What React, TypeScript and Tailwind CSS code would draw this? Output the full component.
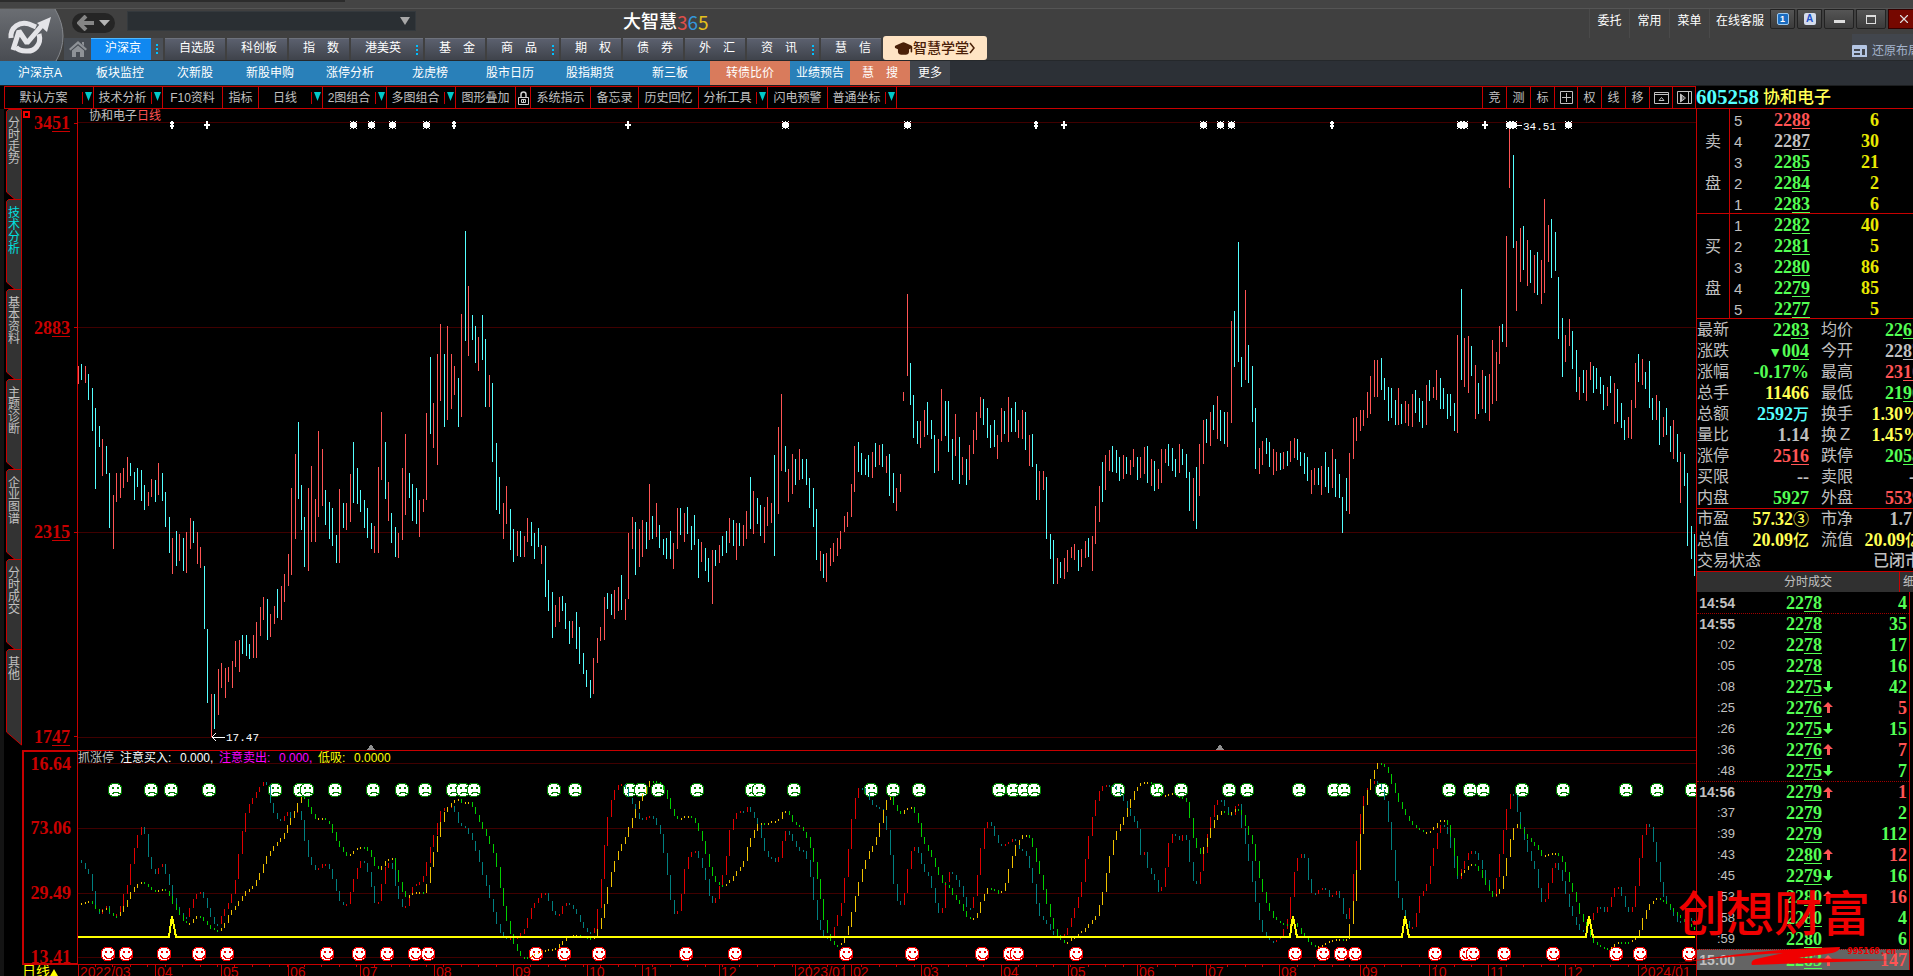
import type { ReactNode } from "react";
import { GraduationCap, X } from "lucide-react";

type Series = { from: number; to: number; top: number; scale: number; bars: string };
type Candle = { x: number; high: number; low: number; up: boolean };

// r = rising day, c = falling day, followed by the high and the low
const daily: Series[] = [
  {
    from: 78, to: 298, top: 100, scale: 2.376,
    bars: "r632-675 c627-665 r632-672 c651-713 c684-786 c732-924 c774-824 r805-893 c822-889 c886-1017 r938-1067 r886-955 r886-946 r874-922 r848-908 c862-893 c884-950 c874-919 c879-953 c915-974 r931-965 r900-943 c903-955 r862-938 c886-953 c931-1014 c991-1076 r1041-1126 c1024-1107 r1031-1095 c1041-1119 r1026-1124 r993-1067 c1000-1052 r1026-1102 r1062-1112 c1107-1257 c1257-1433 r1411-1514 c1411-1494 r1352-1461 r1338-1397 r1349-1421 r1347-1383 r1333-1397 r1285-1347 r1283-1359 c1271-1316 c1271-1321 c1292-1328 r1271-1326 r1240-1326 r1205-1273 r1181-1235 c1186-1283 r1221-1276 r1202-1245 c1162-1231 r1155-1235 r1126-1193 r1079-1155 r922-1128 r841-1043 c765-948",
  },
  {
    from: 301, to: 997, top: 110, scale: 2.529,
    bars: "c948-1062 c1029-1156 r956-1166 r900-1093 r984-1093 r812-1029 r857-1001 c961-1050 c991-1085 c1007-1103 c1075-1146 r959-1146 c994-1057 r994-1062 r921-1042 c840-994 c905-996 c961-1017 c986-1057 c1007-1082 c1044-1110 r1052-1120 r903-1120 r764-936 c840-984 r941-1039 c1019-1095 c1055-1130 r1070-1133 r905-1087 r819-1024 c918-981 c946-1039 c956-1047 r986-1080 r984-1017 r766-986 c625-819 r741-855 r617-898 r541-736 c617-802 r546-784 r617-756 r647-721 c678-802 r516-776 c306-584 r445-622 c518-582 c546-640 r574-660 c518-632 c579-751 r670-751 c690-890 c842-1012 c928-1022 r994-1085 r951-1047 c1009-1113 c1060-1143 r1065-1128 c1065-1130 r1077-1130 r1032-1093 c1042-1103 c1070-1136 c1057-1105 r1100-1148 c1103-1232 c1189-1267 c1219-1335 r1252-1308 r1232-1295 c1229-1267 c1247-1313 c1292-1351 r1292-1335 c1270-1363 c1308-1401 c1373-1426 c1416-1459 c1442-1487 r1386-1477 r1335-1399 r1308-1343 r1232-1340 c1222-1262 c1224-1277 r1214-1287 r1206-1267 c1176-1265 r1237-1290 r1070-1237 r1029-1110 c1042-1176 r1060-1156 r1037-1130 c1042-1110 r946-1087 c1027-1085 r994-1080 c1050-1108 c1085-1125 c1082-1136 c1065-1136 r1095-1161 r1007-1110 c1007-1075 r1019-1093 c1004-1072 c1052-1113 c1024-1100 c1085-1184 r1093-1143 c1108-1166 c1133-1194 r1113-1249 c1113-1153 r1100-1146 c1077-1128 c1065-1120 r1032-1095 c1037-1103 r1044-1138 c1044-1103 r1050-1103 r1014-1085 c928-1060 r964-1072 c981-1047 c999-1077 r1004-1095 r979-1052 r994-1044 c873-1128 r802-1022 r718-913 c850-916 r908-991 r870-971 c883-948 r857-936 c883-933 c883-948 c931-1007 c956-1055 c1009-1138 r1115-1166 c1123-1184 r1120-1194 r1108-1153 r1095-1143 r1082-1128 r1065-1110 r1027-1067 r1017-1055 r946-1029 r850-966 c840-916 c867-923 c883-923 c873-928 r865-931 c842-903 r847-898 c845-903 r875-918 c870-976 c918-994 r956-1014 r921-966 r713-736 r465-673 c640-746 c721-830 c787-845 r787-855 r759-827 c738-822 c784-832 c822-918 r832-913 r706-837 c736-824 c736-865 c832-936 r769-875 c827-946 r878-923 c883-948 r847-936 r809-870 r764-835 r726-779 c731-797 c754-830 c797-855 c784-852 r822-883",
  },
  {
    from: 1001, to: 1694, top: 110, scale: 2.529,
    bars: "r754-840 c761-819 r726-840 c754-814 c738-814 r784-830 r759-832 c764-860 r822-900 c819-903 c895-986 r913-986 r913-961 c928-1085 c1072-1136 c1087-1199 r1133-1199 c1143-1184 r1133-1186 r1113-1168 r1105-1133 r1098-1138 c1113-1166 r1110-1156 r1090-1133 c1082-1130 r1077-1166 r1001-1098 r951-1042 c890-991 r873-961 r860-913 c850-916 c860-918 c878-938 r873-933 c878-921 r885-923 r857-903 c878-936 r878-931 r852-921 c850-943 r883-951 c888-964 r908-959 r857-943 r857-893 c845-900 c855-913 c883-928 r845-918 c857-898 c870-931 c916-1014 r931-1039 c903-1060 r845-976 r784-895 c781-842 r764-850 c746-809 r723-832 c759-837 c764-845 r764-852 r534-792 c508-650 c334-637 c625-701 r455-683 c594-690 c647-789 c754-908 r855-921 r837-898 c830-870 c840-903 r857-923 r865-913 c867-910 r865-908 c862-900 r837-890 r830-880 c832-885 c865-900 c867-921 c878-938 r910-971 r905-948 c905-948 r900-974 c865-953 c903-969 r857-956 c883-979 c921-981 c979-1070 c931-1014 r867-1022 r779-883 r776-837 r759-812 r759-799 r713-779 r673-769 r632-726 r632-726 c627-708 c678-733 c701-787 c703-779 c733-797 r703-797 c744-794 r736-792 r744-799 r718-802 c708-766 c728-789 c736-804 r695-797 c683-736 r701-728 r658-733 c678-756 c703-756 c718-781 c718-774 c741-812 r569-817 c453-683 r577-701 r572-716 c597-673 r645-781 c690-769 r658-756 c673-766 r668-787 r582-744 r612-736 r546-642 c541-587 r319-599 r40-197 c114-349 r331-508 r298-435 c293-405 r329-445 c354-438 r367-463 c359-468 r379-491 r225-463 r291-384 c276-425 c309-407 c422-579 c526-675 r569-637 r529-597 c559-655 c607-713 r675-733 c658-716 r658-736 r637-683 c647-716 c652-706 c675-718 c695-759 r701-749 c673-716 r690-794 c706-789 c741-804 c784-835 r776-830 r733-832 r640-754 c617-688 r630-695 c663-706 c635-754 c728-784 r721-784 c736-847 r776-827 c754-822 c799-865 r784-883 c819-890 r865-994 c870-951 c918-1103 c1052-1136 c1072-1179",
  },
];

const candles: Candle[] = daily.flatMap(({ from, to, top, scale, bars }) => {
  const list = bars.split(" ");
  const step = (to - from) / (list.length - 1);
  return list.map((bar, i) => {
    const [high, low] = bar.slice(1).split("-").map(Number);
    return {
      x: Math.round(from + i * step),
      high: Math.round(top + high / scale),
      low: Math.round(top + low / scale),
      up: bar[0] === "r",
    };
  });
});

// Turning points of the two oscillator lines, in three blocks from left to right
const blocks = [0, 640, 1270];
const fast = [
  "192,390 200,400 209,420 218,434 226,488 235,545 243,553 252,535 257,520 262,535 270,555 280,560 290,545 300,500 311,465 320,395 330,340 340,300 347,288 352,300 358,360 366,405 375,430 380,434 388,412 395,400 405,435 413,465 425,518 435,545 445,560 455,563 465,530 475,500 485,488 492,487 500,510 510,545 520,575 528,588 535,580 545,545 555,530 567,490 577,440 586,350 594,290 602,240 612,215 622,195 632,175 645,155 652,165 658,205 665,240 675,262 684,278 693,260 705,242 713,265 722,240 731,245 740,280 748,350 757,395 768,415 775,425 785,405 795,397 805,415 815,450 824,490 832,518 840,525 850,520 858,480 867,440 876,405 884,390 892,400 901,430 910,480 920,540 930,490 938,430 946,395 955,400 963,430 970,485 980,520 990,540 1000,500 1010,470 1020,462 1032,450 1040,425 1048,375 1057,330 1066,300 1075,255 1082,232 1095,235 1105,228 1115,250 1125,295 1133,285 1143,300 1155,330 1168,375 1180,430 1192,475 1203,530 1215,580 1225,610 1235,625 1245,625 1268,622 1275,610 1287,590 1295,550 1303,525 1312,515 1322,495 1332,482 1340,500 1350,540 1357,557 1370,550 1380,520 1388,520 1398,530 1408,545 1420,575 1432,600 1443,612 1452,608 1460,560 1468,490 1475,400 1483,310 1491,235 1500,195 1508,172 1520,157 1530,172 1540,205 1550,225 1560,260",
  "5,272 12,262 22,256 32,265 40,285 48,310 57,370 66,440 75,520 85,563 95,530 103,465 110,400 120,370 132,360 140,375 150,410 158,440 167,495 175,523 185,505 194,465 203,430 211,375 220,290 229,262 240,242 255,247 264,226 272,250 282,270 290,290 300,350 310,380 322,385 333,400 342,370 350,310 358,298 367,320 378,345 388,360 400,365 410,400 418,460 427,535 435,585 445,610 455,628 465,625 475,590 484,555 493,515 501,440 510,350 518,265 527,200 536,170 545,175 555,195 565,222 575,230 590,238 600,280 608,330 616,430 625,500 633,530 642,520 650,455 658,385 667,345 678,360 686,395 697,425 710,445 717,495 727,540 737,563 745,480 752,430 760,425 772,445 785,475 795,520 803,543 812,525 820,480 828,410 836,330 845,275 855,275 862,295 870,325 880,350 890,345 900,340 908,325 918,330 930,365 940,360 950,400 960,450 970,520 980,565 992,575 1003,600 1013,615 1025,625 1035,620 1045,600 1057,560 1068,520 1078,480 1087,410 1095,340 1105,270 1113,220 1122,185 1132,168 1145,162 1158,168 1172,190 1184,215 1195,245 1207,270 1217,290 1226,375 1237,365 1245,430 1258,435 1265,480 1274,490 1283,440 1290,375 1298,312 1310,315 1318,338 1326,315 1335,315 1343,370 1350,440 1358,463 1367,460 1373,410 1383,350 1390,300 1398,255 1405,225 1417,203 1428,220 1438,252 1448,255 1455,230 1465,220 1473,290 1483,345 1492,400 1500,460 1510,535 1520,590 1530,622",
  "5,638 15,630 25,618 35,590 45,550 52,475 60,410 70,372 82,370 90,430 97,485 107,497 118,480 130,472 140,490 148,515 156,478 167,490 177,550 185,568 193,555 200,470 208,375 216,285 225,215 233,182 243,165 255,152 265,165 275,190 284,230 292,310 300,390 308,480 318,520 330,570 345,605 355,560 363,510 370,475 378,492 386,440 395,385 405,320 415,283 425,290 432,305 440,340 448,390 456,460 465,425 475,395 485,370 495,360 505,375 515,405 525,440 535,480 545,500 555,430 565,345 575,260 586,190 597,195 605,250 615,300 625,345 637,390 648,420 658,490 668,532 678,480 687,420 697,395 707,420 717,460 727,505 737,550 748,580 757,600 767,605 777,590 787,560 800,530 810,530 820,548 830,520 840,480 850,465 860,495 870,535 880,548 890,520 898,430 907,350 915,290 925,273 935,320 945,390 955,460 965,510 980,540 1000,580 1020,560 1040,580",
];
const slow = [
  "192,522 205,515 218,514 230,530 240,545 260,535 272,555 283,560 295,545 310,510 322,480 335,462 345,457 358,465 370,480 380,483 400,475 412,495 425,530 435,545 445,572 460,585 470,570 480,558 490,560 500,575 515,595 530,605 545,590 560,550 580,520 600,485 620,465 635,430 650,380 670,345 690,320 705,280 720,245 730,215 740,195 748,210 757,240 770,265 790,264 805,280 815,310 825,340 840,365 850,378 865,362 880,350 893,350 905,370 915,405 922,422 935,405 945,388 960,385 970,430 980,470 992,505 1005,490 1020,487 1038,487 1046,455 1055,400 1065,350 1075,290 1085,250 1097,228 1110,212 1120,205 1132,220 1145,212 1157,235 1170,270 1182,300 1195,330 1207,370 1217,420 1226,490 1238,560 1250,615 1262,655 1275,680 1290,684 1305,675 1320,665 1340,658 1360,655 1375,635 1390,618 1410,615 1425,620 1445,628 1458,615 1470,570 1480,520 1490,460 1500,410 1515,360 1530,325 1540,290 1555,240",
  "0,205 10,180 22,152 35,152 50,165 62,190 70,225 80,255 92,267 110,258 122,258 135,280 145,310 155,350 165,400 177,440 190,465 205,467 220,450 235,425 252,400 262,350 275,310 290,275 305,285 325,270 335,275 350,240 360,245 375,280 390,292 405,315 418,365 430,430 440,500 452,590 462,625 475,645 490,645 500,620 512,580 522,520 532,470 545,410 560,365 575,335 588,270 600,215 610,195 620,225 635,255 650,235 665,230 678,270 690,330 710,370 725,420 740,460 755,470 770,505 785,525 797,560 810,567 822,560 835,510 850,475 870,480 880,497 893,460 905,400 920,340 940,310 957,330 965,370 980,440 995,520 1010,590 1025,625 1040,643 1060,620 1080,605 1100,580 1115,560 1130,500 1145,400 1160,320 1180,270 1195,225 1210,180 1225,160 1240,152 1255,165 1268,185 1280,200 1300,187 1315,200 1335,205 1345,260 1355,330 1370,375 1382,345 1395,300 1408,262 1422,243 1440,258 1455,238 1470,240 1483,290 1500,345 1515,440 1530,510",
  "5,560 20,578 40,585 60,580 75,610 90,635 105,650 125,645 145,632 165,627 185,632 197,570 207,480 215,380 225,250 235,190 250,130 262,100 275,102 287,125 300,170 315,220 335,265 352,290 375,308 395,300 408,278 420,268 430,272 440,310 450,370 457,440 470,428 485,408 498,400 510,420 525,460 545,500 560,485 572,430 582,360 592,300 603,280 615,300 630,325 650,350 665,380 685,370 702,368 715,395 730,450 745,500 760,560 775,600 790,635 805,650 830,655 850,635 880,635 900,615 910,570 925,525 945,505 965,515 985,540 1000,560 1020,580 1040,600",
];

const DAY = 3.4835;

function sample(line: string[]) {
  const points = line.flatMap((block, b) =>
    block.split(" ").map((p) => {
      const [x, y] = p.split(",").map(Number);
      return [blocks[b] + x / 2.45, 730 + y / 3];
    }),
  );
  const values: number[] = [];
  for (let i = 0; i < 465; i++) {
    const x = 78 + i * DAY;
    const next = points.findIndex((p) => p[0] >= x);
    if (next <= 0) {
      values.push(next === 0 ? points[0][1] : points[points.length - 1][1]);
      continue;
    }
    const [ax, ay] = points[next - 1];
    const [bx, by] = points[next];
    values.push(ay + ((by - ay) * (x - ax)) / (bx - ax || 1));
  }
  return values;
}

function Oscillator({ line, up, down }: { line: string[]; up: string; down: string }) {
  const values = sample(line);
  return (
    <>
      {values.slice(1).map((v, i) => {
        const prev = values[i];
        return (
          <rect
            key={i}
            x={Math.round(78 + (i + 1) * DAY)}
            y={Math.round(Math.min(v, prev))}
            width={1}
            height={Math.max(2, Math.round(Math.abs(v - prev)))}
            fill={v < prev ? up : down}
          />
        );
      })}
    </>
  );
}

const sad = [115, 151, 171, 209, 275, 300, 307, 335, 373, 402, 425, 453, 463, 474, 554, 575, 630, 641, 658, 697, 752, 759, 794, 871, 893, 919, 999, 1013, 1024, 1034, 1118, 1157, 1181, 1229, 1247, 1299, 1334, 1344, 1382, 1449, 1470, 1483, 1522, 1563, 1626, 1657, 1692];
const happy = [108, 126, 164, 199, 227, 327, 359, 387, 415, 428, 536, 564, 599, 686, 735, 846, 912, 982, 1010, 1017, 1076, 1295, 1323, 1341, 1355, 1435, 1466, 1473, 1504, 1553, 1616, 1640, 1689];

function Face({ x, y, mood }: { x: number; y: number; mood: "sad" | "happy" }) {
  const color = mood === "sad" ? "#008000" : "#f00000";
  return (
    <g transform={`translate(${x} ${y})`}>
      <ellipse rx={7} ry={7} fill="#fff" stroke={color} strokeWidth={1} />
      <path d="M-3 -3h2v2h-2zM2 -3h2v2h-2z" fill={color} />
      <path
        d={mood === "sad" ? "M-3 4v-1h1v-1h5v1h1v1" : "M-4 1v1h1v1h1v1h5v-1h1v-1h1v-1"}
        fill="none"
        stroke={color}
      />
    </g>
  );
}

const events: [number, "star" | "plus" | "dot"][] = [
  [172, "dot"], [207, "plus"], [353, "star"], [371, "star"], [392, "star"], [426, "star"], [454, "dot"], [628, "plus"],
  [785, "star"], [907, "star"], [1036, "dot"], [1064, "plus"], [1203, "star"], [1220, "star"], [1231, "star"], [1332, "dot"],
  [1460, "star"], [1464, "star"], [1485, "plus"], [1509, "star"], [1513, "star"], [1568, "star"],
];
const eventPaths = {
  star: "M-2 -3h5v6h-5zM-3 -2h7v4h-7zM-3 -4h1v1h-1zM3 -4h1v1h-1zM-3 3h1v1h-1zM3 3h1v1h-1zM0 -4h1v8h-1z",
  plus: "M-1 -4h2v8h-2zM-3 -1h6v2h-6z",
  dot: "M-1 -4h2v1h1v2h-1v1h1v2h-1v2h-2v-2h-1v-2h1v-1h-1v-2h1z",
};

const priceGrid = [122, 327, 532, 737];
const oscGrid = [763, 828, 893, 957];
const spikes = [172, 1293, 1405, 1589];

const months: [number, string][] = [
  [78, "2022/03"], [155, "04"], [221, "05"], [288, "06"], [360, "07"], [434, "08"], [513, "09"], [587, "10"], [642, "11"],
  [719, "12"], [795, "2023/01"], [851, "02"], [921, "03"], [1001, "04"], [1068, "05"], [1137, "06"], [1206, "07"],
  [1279, "08"], [1360, "09"], [1429, "10"], [1488, "11"], [1565, "12"], [1638, "2024/01"],
];

function PriceChart() {
  return (
    <svg className="block h-full w-full" viewBox="78 109 1618 641" preserveAspectRatio="none" shapeRendering="crispEdges">
      {priceGrid.map((y) => (
        <rect key={y} x={78} y={y} width={1618} height={1} fill="#400000" />
      ))}
      {candles.map((c, i) => (
        <rect key={i} x={c.x} y={c.high} width={1} height={c.low - c.high} fill={c.up ? "#ff5454" : "#54ffff"} />
      ))}
      {events.map(([x, kind]) => (
        <path key={x} d={eventPaths[kind]} transform={`translate(${x} 125)`} fill="#fff" />
      ))}
      <path d="M1512 122l3 3h7M225 737h-13M216 733l-4 4l4 4" fill="none" stroke="#fff" />
      <rect x={225} y={731} width={32} height={12} fill="#000" />
      <rect x={1522} y={120} width={32} height={12} fill="#000" />
      <g fill="#fff" fontSize={11} fontFamily="Liberation Mono, monospace" shapeRendering="auto">
        <text x={226} y={741}>17.47</text>
        <text x={1523} y={130}>34.51</text>
      </g>
      <path d="M371 744l4 6h-8zM1220 744l4 6h-8z" fill="#909090" />
    </svg>
  );
}

function IndicatorChart() {
  return (
    <svg className="block h-full w-full" viewBox="78 751 1618 213" preserveAspectRatio="none" shapeRendering="crispEdges">
      {oscGrid.map((y) => (
        <rect key={y} x={78} y={y} width={1618} height={1} fill="#400000" />
      ))}
      {sad.map((x) => (
        <Face key={x} x={x} y={790} mood="sad" />
      ))}
      {happy.map((x) => (
        <Face key={x} x={x} y={954} mood="happy" />
      ))}
      <Oscillator line={fast} up="#e00000" down="#008080" />
      <Oscillator line={slow} up="#f0c000" down="#00d000" />
      <path
        d={`M78 937${spikes.map((x) => `H${x - 3}L${x} 916L${x + 4} 937`).join("")}H1695`}
        fill="none"
        stroke="#ffff00"
        strokeWidth={2}
      />
    </svg>
  );
}

function TimeAxis() {
  const ticks = Array.from({ length: 92 }, (_, i) => Math.round(95 + i * 5 * DAY));
  return (
    <svg className="block h-full w-full" viewBox="78 965 1618 11" preserveAspectRatio="none">
      {ticks.map((x) => (
        <rect key={x} x={x} y={965} width={1} height={2} fill="#c80000" />
      ))}
      {months.map(([x, label]) => (
        <g key={x} fill="#c80000">
          <rect x={x} y={965} width={1} height={11} />
          <text x={x + 2} y={977} fontSize={14} fontFamily="Liberation Sans, sans-serif">{label}</text>
        </g>
      ))}
    </svg>
  );
}

function Logo() {
  return (
    <svg className="block h-[52px] w-16 shrink-0" viewBox="0 0 64 52">
      <defs>
        <linearGradient id="plate" x1="0" y1="0" x2="0" y2="1">
          <stop offset="0" stopColor="#6b6e73" />
          <stop offset="1" stopColor="#494c52" />
        </linearGradient>
      </defs>
      <path d="M0 0H55Q63 14 63 27T56 52H0z" fill="url(#plate)" />
      <path d="M55 0Q63 14 63 27T56 52" fill="none" stroke="#85888d" />
      <g fill="none" stroke="#e4e4e8" strokeWidth="5">
        <path d="M11 29C10 18 20 12 29 15L36 18" />
        <path d="M39 25C42 36 34 43 26 42C21 42 18 41 16 38" />
        <path d="M13 41L19 22L27 34L44 14" strokeLinejoin="bevel" />
      </g>
      <path d="M37 14L51 8L47 23z" fill="#e4e4e8" />
    </svg>
  );
}

const markets: { name: string; menu?: boolean }[] = [
  { name: "自选股" },
  { name: "科创板" },
  { name: "指　数" },
  { name: "港美英", menu: true },
  { name: "基　金" },
  { name: "商　品", menu: true },
  { name: "期　权" },
  { name: "债　券" },
  { name: "外　汇" },
  { name: "资　讯", menu: true },
  { name: "慧　信" },
];

function Dots() {
  return (
    <span className="flex w-3 flex-col items-center gap-[2px]">
      <i className="size-[2px] bg-[#00c0ff]" />
      <i className="size-[2px] bg-[#00c0ff]" />
      <i className="size-[2px] bg-[#00c0ff]" />
    </span>
  );
}

const windowButton = "flex h-5 shrink-0 items-center justify-center rounded-b-[2px] border border-[#222] bg-linear-to-b from-[#555] to-[#3c3c3c]";

function TitleBar() {
  return (
    <header className="flex h-[61px] shrink-0 flex-col border-b border-[#25282b] bg-[#404040]">
      <div className="h-2 shrink-0 bg-[#444]">
        <div className="h-[2px] w-[345px] bg-[#2c2c2c]" />
      </div>
      <div className="flex min-h-0 flex-1 border-t border-[#555]">
        <Logo />
        <div className="flex min-w-0 flex-1 flex-col">
          <div className="flex h-[29px] shrink-0">
            <button aria-label="后退" className="mt-1 ml-2 flex h-5 w-[43px] items-center justify-center gap-1 rounded-full bg-[#252525]">
              <svg width="18" height="16" viewBox="0 0 18 16"><path d="M9 1L2 8l7 7M3 8h14" fill="none" stroke="#858585" strokeWidth="4" /></svg>
              <svg width="11" height="6" viewBox="0 0 11 6"><path d="M0 0h11L5.500 6z" fill="#b4b4b4" /></svg>
            </button>
            <div className="relative mt-[2px] ml-3 h-5 w-[289px]">
              <select aria-label="搜索" className="h-full w-full appearance-none border border-[#34393d] bg-[#2a2f33]" />
              <svg className="pointer-events-none absolute top-1.5 right-1.5" width="10" height="8" viewBox="0 0 10 8"><path d="M0 0h10L5 8z" fill="#a8a8a8" /></svg>
            </div>
            <h1 className="ml-[207px] flex text-[18px] leading-[26px] font-medium text-white">
              大智慧
              <span className="font-['Noto_Sans_CJK_SC',sans-serif] text-[19px] font-normal">
                <span className="text-[#e04f4a]">3</span>
                <span className="text-[#3498db]">6</span>
                <span className="text-[#e6c01c]">5</span>
              </span>
            </h1>
            <nav className="ml-auto flex text-xs leading-6 text-white">
              {["委托", "常用", "菜单"].map((item) => (
                <a key={item} href="#" className="w-10 border-l border-[#4a4a4a] text-center">{item}</a>
              ))}
              <a href="#" className="w-[61px] border-l border-[#4a4a4a] text-center">在线客服</a>
            </nav>
            <div className="-mr-1.5 flex shrink-0 gap-[2px]">
              <button aria-label="皮肤" className={`${windowButton} w-[25px]`}>
                <span className="h-3 w-3 rounded-[2px] border border-[#9cc8ee] bg-[#1a6cc0] text-[9px] leading-[10px] font-bold text-white">1</span>
              </button>
              <button aria-label="字体" className={`${windowButton} w-[25px]`}>
                <span className="h-3 w-3 rounded-[2px] bg-[#d4dcec] text-[10px] leading-3 font-bold text-[#2050c8]">A</span>
              </button>
              <button aria-label="最小化" className={`${windowButton} w-[30px]`}>
                <i className="mt-1 h-[3px] w-[11px] bg-[#ddd]" />
              </button>
              <button aria-label="最大化" className={`${windowButton} w-[30px]`}>
                <i className="h-[9px] w-[10px] border border-t-2 border-[#ddd]" />
              </button>
              <button aria-label="关闭" className="flex h-5 w-[31px] shrink-0 items-center justify-center border border-[#300] bg-[#760800]">
                <X size={14} color="#ddd" />
              </button>
            </div>
          </div>
          <div className="flex min-h-0 flex-1">
            <a href="#" aria-label="首页" className="flex w-[27px] items-center justify-center bg-[#474c53]">
              <svg width="18" height="16" viewBox="0 0 18 16">
                <path d="M9 0L18 8L16.500 9.500L9 3L1.500 9.500L0 8zM13 1h2v4l-2-2zM9 4.500L15 9.500V16H11V11H7V16H3V9.500z" fill="#8e9297" />
              </svg>
            </a>
            <div className="flex gap-[2px] text-xs leading-[18px] text-white">
              <button className="flex w-[72px] items-center bg-[#4b5058]">
                <span className="h-full w-[60px] border-t border-[#50b8ff] bg-[#1088f0] pl-1">沪深京</span>
                <Dots />
              </button>
              {markets.map((m) => (
                <button key={m.name} className={`${m.menu ? "w-[72px]" : "w-[60px]"} flex items-center border-t border-[#6e727c] bg-linear-to-b from-[#5b606e] to-[#3f434b]`}>
                  <span className="h-full flex-1 pl-1">{m.name}</span>
                  {m.menu && <Dots />}
                </button>
              ))}
            </div>
            <a href="#" className="-mt-[2px] ml-[2px] flex h-6 w-[104px] items-center justify-center rounded-[3px] bg-[#ffe4c4] text-[14px] text-[#4a2008]">
              <GraduationCap size={19} fill="#4a2008" />
              <span className="font-medium">智慧学堂</span>
              <svg width="7" height="12" viewBox="0 0 7 12"><path d="M1 1l4 5l-4 5" fill="none" stroke="#4a2008" strokeWidth="1.500" /></svg>
            </a>
            <button className="-mt-1 -mr-2 ml-auto flex w-[69px] shrink-0 items-center gap-[5px] bg-[#42464d] pt-2 text-xs whitespace-nowrap text-[#a4b4cc]">
              <svg width="15" height="12" viewBox="0 0 15 12" className="shrink-0">
                <path d="M0 1q0-1 1-1h13q1 0 1 1v11H0z" fill="#b4c6e4" />
                <path d="M2 4h6v2H2zM2 8h6v2H2zM10 4h3v6h-3z" fill="#42464d" />
              </svg>
              还原布局
            </button>
          </div>
        </div>
      </div>
    </header>
  );
}

const shortcuts: [string, string][] = [
  ["沪深京A", "w-20 bg-[#2980b9]"],
  ["板块监控", "w-20 bg-[#2980b9]"],
  ["次新股", "w-[70px] bg-[#2980b9]"],
  ["新股申购", "w-20 bg-[#2980b9]"],
  ["涨停分析", "w-20 bg-[#2980b9]"],
  ["龙虎榜", "w-20 bg-[#2980b9]"],
  ["股市日历", "w-20 bg-[#2980b9]"],
  ["股指期货", "w-20 bg-[#2980b9]"],
  ["新三板", "w-20 bg-[#2980b9]"],
  ["转债比价", "w-20 bg-[#d97b5c]"],
  ["业绩预告", "w-[60px] bg-[#2980b9]"],
  ["慧　搜", "w-[60px] bg-[#d97b5c]"],
  ["更多", "w-10 bg-[#40444b]"],
];

type Tool = { name: string; width: string; menu?: boolean };

const tools: Tool[] = [
  { name: "默认方案", width: "w-[89px]", menu: true },
  { name: "技术分析", width: "w-[69px]", menu: true },
  { name: "F10资料", width: "w-[60px]" },
  { name: "指标", width: "w-[36px]" },
  { name: "日线", width: "w-[64px]", menu: true },
  { name: "2图组合", width: "w-[64px]", menu: true },
  { name: "多图组合", width: "w-[69px]", menu: true },
  { name: "图形叠加", width: "w-[60px]" },
  { name: "锁定", width: "w-[15px]" },
  { name: "系统指示", width: "w-[60px]" },
  { name: "备忘录", width: "w-[48px]" },
  { name: "历史回忆", width: "w-[60px]" },
  { name: "分析工具", width: "w-[69px]", menu: true },
  { name: "闪电预警", width: "w-[60px]" },
  { name: "普通坐标", width: "w-[69px]", menu: true },
];

const glyphs: Record<string, ReactNode> = {
  十字: <path d="M1.500 1.500h12v12h-12zM7.500 3v9M3 7.500h9" />,
  收起: <path d="M.5 2.500h14v11H.5zM1 4.500h13M5 10.500h5l-2.500-3z" />,
  展开: <path d="M.5 1.500h14v12H.5zM3.500 4v8l5-4zM4.500 5v6M6 6v4M11.500 2v11" />,
};

function Padlock() {
  return (
    <svg width="11" height="14" viewBox="0 0 11 14" fill="none" stroke="#d0d0d0">
      <path d="M3 6V3.500Q3 1 5.500 1T8 3.500V6" strokeWidth="1.500" />
      <path d="M.5 6.500h10v7H.5zM3.500 8.500h4v3h-4zM5.500 9v2" />
    </svg>
  );
}

function Toolbar() {
  return (
    <div className="flex h-[23px] shrink-0 bg-black pl-1">
      <div className="flex min-w-0 flex-1 border border-[#c80000] text-xs leading-5 text-[#c0c0c0]">
        {tools.map((t) => (
          <button key={t.name} aria-label={t.name} className={`${t.width} flex shrink-0 items-center border-r border-[#c80000] whitespace-nowrap`}>
            <span className="flex flex-1 justify-center">{t.name === "锁定" ? <Padlock /> : t.name}</span>
            {t.menu && (
              <span className="flex h-3 w-[11px] justify-center border-l border-[#c80000]">
                <svg width="7" height="9" viewBox="0 0 7 9"><path d="M0 0h7L3.500 9z" fill="#00c8c8" /></svg>
              </span>
            )}
          </button>
        ))}
        <div className="ml-auto flex">
          {["竞", "测", "标", "十字", "权", "线", "移", "收起", "展开"].map((t) => (
            <button key={t} aria-label={t} className={`${t in glyphs ? "w-[23px]" : "w-6"} flex items-center justify-center border-l border-[#c80000]`}>
              {t in glyphs ? (
                <svg width="15" height="15" viewBox="0 0 15 15" fill="none" stroke="#c0c0c0">{glyphs[t]}</svg>
              ) : (
                t
              )}
            </button>
          ))}
        </div>
      </div>
      <h2 className="flex w-[217px] shrink-0 items-center gap-1 border-b border-[#c80000] pt-px font-bold whitespace-nowrap">
        <span className="font-['Liberation_Serif',serif] text-[21px] leading-[21px] text-[#54ffff]">605258</span>
        <span className="text-[17px] leading-[21px] font-medium text-[#ffff54]">协和电子</span>
      </h2>
    </div>
  );
}

const sideTabs = ["分时走势", "技术分析", "基本资料", "主题诊断", "企业图谱", "分时成交", "其他"];

function SideTabs() {
  return (
    <nav className="flex w-[22px] shrink-0 flex-col border-l-4 border-[#141414] pl-[2px]">
      {sideTabs.map((tab) => (
        <button key={tab} className={`${tab === "技术分析" ? "text-[#00e0e0]" : "text-[#c0c0c0]"} relative h-[90px] text-xs leading-3`}>
          <svg className="absolute inset-0" width="16" height="98" viewBox="0 0 16 98">
            <path d="M.5 2.500L2.500 .5H15.500V96L8 89.500L.5 83z" fill="#333" stroke="#c80000" />
          </svg>
          <span className="relative flex h-full flex-col items-center pt-2">
            {[...tab].map((ch) => (
              <span key={ch}>{ch}</span>
            ))}
          </span>
        </button>
      ))}
    </nav>
  );
}

// The last two digits are cents and carry a rule below them
function Price({ value }: { value: string }) {
  return (
    <>
      {value.slice(0, -2)}
      <span className="underline decoration-1 underline-offset-2">{value.slice(-2)}</span>
    </>
  );
}

const axisText = "font-['Liberation_Serif',serif] text-[18px] font-bold text-[#c80000]";

function Charts() {
  return (
    <main className="flex min-w-0 flex-1 flex-col">
      <section className="flex min-h-0 flex-1">
        <div className={`${axisText} relative flex w-[56px] shrink-0 flex-col justify-between border-r border-[#c80000] pt-1 pb-[3px] text-right leading-5`}>
          <i className="absolute top-[2px] left-[1px] size-[7px] border-2 border-[#f00000]" />
          {["3451", "2883", "2315", "1747"].map((p) => (
            <div key={p} className="flex items-center justify-end gap-1">
              <span><Price value={p} /></span>
              <i className="h-px w-[3px] bg-[#c80000]" />
            </div>
          ))}
        </div>
        <div className="relative min-w-0 flex-1">
          <PriceChart />
          <p className="absolute top-0 left-[11px] text-xs leading-[14px] text-[#c0c0c0]">
            协和电子<span className="text-[#ff5454]">日线</span>
          </p>
        </div>
      </section>
      <section className="flex h-[215px] shrink-0">
        <div className={`${axisText} flex w-[56px] shrink-0 flex-col justify-between overflow-hidden border-2 border-r border-[#c80000] pt-1.5 pr-1.5 text-right leading-3`}>
          {["16.64", "73.06", "29.49", "13.41"].map((p) => (
            <span key={p}>{p}</span>
          ))}
        </div>
        <div className="relative min-w-0 flex-1 border-y border-[#c80000]">
          <IndicatorChart />
          <p className="absolute top-0 left-0 flex text-xs leading-[14px] text-white">
            <span className="w-[42px] text-[#c0c0c0]">抓涨停</span>
            <span className="w-[60px]">注意买入:</span>
            <span className="w-[39px]">0.000,</span>
            <span className="w-[60px] text-[#ff00ff]">注意卖出:</span>
            <span className="w-[39px] text-[#ff00ff]">0.000,</span>
            <span className="w-[36px] text-[#ffff00]">低吸:</span>
            <span className="text-[#ffff00]">0.0000</span>
          </p>
        </div>
      </section>
      <section className="flex h-[11px] shrink-0 overflow-hidden">
        <div className="flex w-[56px] shrink-0 items-start text-[14px] leading-3 whitespace-nowrap text-[#ffff00]">
          日线
          <svg className="mt-1" width="8" height="7" viewBox="0 0 8 7"><path d="M4 0l4 7H0z" fill="#ffff00" /></svg>
        </div>
        <div className="min-w-0 flex-1">
          <TimeAxis />
        </div>
      </section>
    </main>
  );
}

const RED = "text-[#ff5454]";
const GREEN = "text-[#54ff54]";
const YELLOW = "text-[#ffff54]";
const GREY = "text-[#c0c0c0]";

type Level = [level: number, price: string, volume: string, color: string];

const sells: Level[] = [
  [5, "2288", "6", RED],
  [4, "2287", "30", GREY],
  [3, "2285", "21", GREEN],
  [2, "2284", "2", GREEN],
  [1, "2283", "6", GREEN],
];
const buys: Level[] = [
  [1, "2282", "40", GREEN],
  [2, "2281", "5", GREEN],
  [3, "2280", "86", GREEN],
  [4, "2279", "85", GREEN],
  [5, "2277", "5", GREEN],
];

const digits = "font-['Liberation_Serif','Noto_Sans_CJK_SC',serif] text-[18px] font-bold";

function Book({ side, rows }: { side: string; rows: Level[] }) {
  return (
    <div className="flex h-[105px] border-b border-[#c80000]">
      <div className="flex w-[33px] flex-col items-center gap-[21px] border-r border-[#c80000] pt-[22px] text-[16px] leading-[21px]">
        <span>{side}</span>
        <span>盘</span>
      </div>
      <table className="w-[149px] table-fixed border-separate border-spacing-0 leading-[19px]">
        <tbody>
          {rows.map(([level, price, volume, color]) => (
            <tr key={level} className="h-[21px]">
              <td className="w-5 pt-[2px] pl-1 text-[15px]">{level}</td>
              <td className={`${digits} ${color} w-[60px] pt-[2px] text-right`}><Price value={price} /></td>
              <td className={`${digits} pt-[2px] text-right text-[#e8e800]`}>{volume}</td>
            </tr>
          ))}
        </tbody>
      </table>
    </div>
  );
}

type Quote = [label: string, value: ReactNode, color: string, label2: string, value2: ReactNode, color2: string];

// Chinese characters that follow a number, kept from stretching the row
function Unit({ children }: { children: ReactNode }) {
  return <span className="text-[16px] leading-none font-medium">{children}</span>;
}

const quotes: Quote[] = [
  ["最新", <Price value="2283" />, GREEN, "均价", <Price value="2261" />, GREEN],
  ["涨跌", <><span className="text-[14px] leading-none">▼</span>0<u className="decoration-1 underline-offset-2">04</u></>, GREEN, "今开", <Price value="2287" />, GREY],
  ["涨幅", "-0.17%", GREEN, "最高", <Price value="2310" />, RED],
  ["总手", "11466", YELLOW, "最低", <Price value="2190" />, GREEN],
  ["总额", <>2592<Unit>万</Unit></>, "text-[#54ffff]", "换手", "1.30%", YELLOW],
  ["量比", "1.14", GREY, "换Ｚ", "1.45%", YELLOW],
  ["涨停", <Price value="2516" />, RED, "跌停", <Price value="2058" />, GREEN],
  ["买限", "--", GREY, "卖限", "--", GREY],
  ["内盘", "5927", GREEN, "外盘", "5539", RED],
  ["市盈", <>57.32<Unit>③</Unit></>, YELLOW, "市净", "1.71", GREY],
  ["总值", <>20.09<Unit>亿</Unit></>, YELLOW, "流值", <>20.09<Unit>亿</Unit></>, YELLOW],
];

type Trade = [time: string, price: string, move: "up" | "down" | "", volume: string, color: string];

const trades: Trade[] = [
  ["14:54", "2278", "", "4", GREEN],
  ["14:55", "2278", "", "35", GREEN],
  [":02", "2278", "", "17", GREEN],
  [":05", "2278", "", "16", GREEN],
  [":08", "2275", "down", "42", GREEN],
  [":25", "2276", "up", "5", RED],
  [":26", "2275", "down", "15", GREEN],
  [":36", "2276", "up", "7", RED],
  [":48", "2275", "down", "7", GREEN],
  ["14:56", "2279", "up", "1", RED],
  [":37", "2279", "", "2", GREEN],
  [":39", "2279", "", "112", GREEN],
  [":43", "2280", "up", "12", RED],
  [":45", "2279", "down", "16", GREEN],
  [":53", "2280", "up", "16", RED],
  [":58", "2280", "", "4", GREEN],
  [":59", "2280", "", "6", GREEN],
  ["15:00", "2283", "up", "147", RED],
];

function Arrow({ move }: { move: "up" | "down" }) {
  return (
    <svg className="ml-px" width="10" height="11" viewBox="0 0 10 11">
      {move === "up" ? (
        <path d="M5 0l5 5H7v6H4V5H0z" fill="#ff5454" />
      ) : (
        <path d="M5 11l5-5H7V0H4v6H0z" fill="#54ff54" />
      )}
    </svg>
  );
}

function QuotePanel() {
  return (
    <aside className="w-[217px] shrink-0 overflow-hidden border-l border-[#c80000] text-[#c0c0c0]">
      <div className="flex w-[224px] flex-col">
        <Book side="卖" rows={sells} />
        <Book side="买" rows={buys} />
        <table className="w-full table-fixed border-separate border-spacing-0 text-[16px] leading-5">
          <tbody>
            {quotes.map(([label, value, color, label2, value2, color2]) => {
              const rule = label === "市盈" ? "border-t border-[#c80000]" : "";
              return (
                <tr key={label} className="h-[21px] whitespace-nowrap">
                  <th className={`${rule} w-[36px] text-left font-normal`}>{label}</th>
                  <td className={`${rule} ${digits} ${color} w-[76px] text-right leading-[18px]`}>{value}</td>
                  <th className={`${rule} w-[46px] pl-3 text-left font-normal`}>{label2}</th>
                  <td className={`${rule} ${digits} ${color2} text-right leading-[18px]`}>{value2}</td>
                </tr>
              );
            })}
            <tr className="h-[21px]">
              <th colSpan={3} className="text-left font-normal">交易状态</th>
              <td className="text-right font-medium">已闭市</td>
            </tr>
          </tbody>
        </table>
        <div className="flex h-[21px] shrink-0 border-t border-[#c80000] bg-[#303030] text-xs leading-5">
          <h3 className="w-[202px] pl-[87px]">分时成交</h3>
          <button className="border-l border-[#c80000] pl-[3px]">细</button>
        </div>
        <table className="w-[213px] table-fixed border-separate border-spacing-0 border-r border-[#c80000] leading-5">
          <tbody>
            {trades.map(([time, price, move, volume, color]) => {
              const full = time.length === 5;
              const rule = full && time !== "14:54" ? "border-t border-dotted border-[#a00000]" : "";
              return (
                <tr key={time} className={`h-[21px] ${time === "15:00" ? "bg-[#646464]" : ""}`}>
                  <td className={`${rule} w-[38px] text-right ${full ? "text-[14px] font-bold" : "text-[13px]"}`}>{time}</td>
                  <td className={`${rule} ${digits} ${GREEN} w-[87px] text-right`}><Price value={price} /></td>
                  <td className={`${rule} w-4`}>{move && <Arrow move={move} />}</td>
                  <td className={`${rule} ${digits} ${color} pr-[2px] text-right`}>{volume}</td>
                </tr>
              );
            })}
          </tbody>
        </table>
      </div>
    </aside>
  );
}

function Watermark() {
  return (
    <div className="pointer-events-none absolute right-[17px] bottom-[5px] flex w-[218px] flex-col text-[#f00000]">
      <p className="text-[48px] leading-[52px] font-medium">创想财富</p>
      <div className="relative h-[30px]">
        <svg className="absolute inset-0" width="218" height="30" viewBox="0 0 218 30">
          <path d="M0 22Q70 10 135 7L162 6Q162 10 154 12L120 17L215 19L74 24Q72 20 78 18L105 12Q60 14 0 22z" fill="#f00000" />
        </svg>
        <span className="absolute top-1 right-0 font-['DejaVu_Sans_Mono',monospace] text-[9px] leading-3 font-bold">995168.cn</span>
      </div>
    </div>
  );
}

export default function App() {
  return (
    <div className="relative flex h-screen w-full flex-col overflow-hidden bg-black font-['Liberation_Sans','Noto_Sans_CJK_SC',sans-serif]">
      <TitleBar />
      <nav className="flex h-[25px] shrink-0 border-b border-[#1c1e20] bg-[#2c3036] text-center text-xs leading-6 text-white">
        {shortcuts.map(([name, style]) => (
          <a key={name} href="#" className={`${style} shrink-0`}>{name}</a>
        ))}
      </nav>
      <Toolbar />
      <div className="flex min-h-0 flex-1">
        <SideTabs />
        <Charts />
        <QuotePanel />
      </div>
      <Watermark />
    </div>
  );
}
